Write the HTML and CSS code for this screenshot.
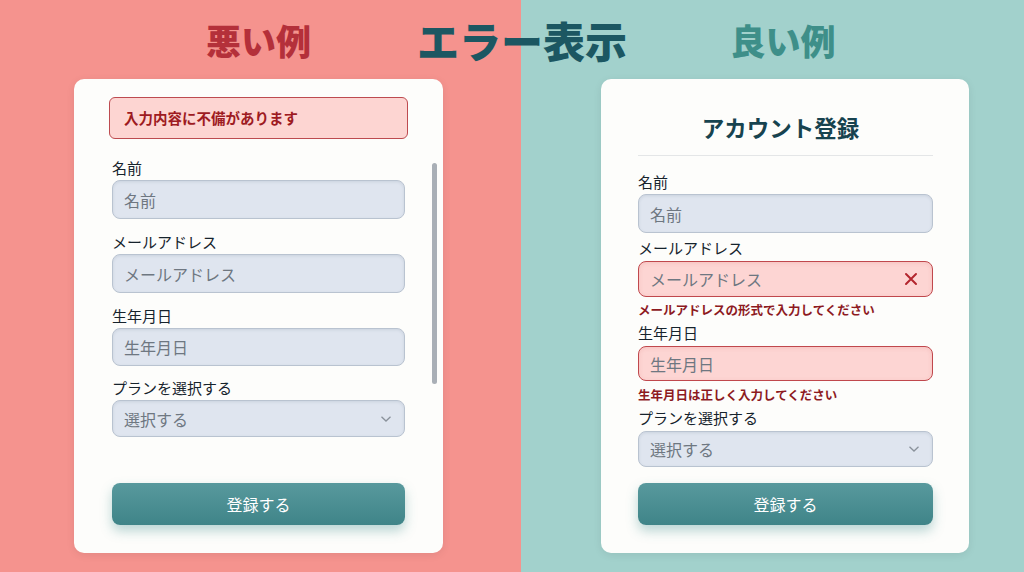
FILE: index.html
```html
<!DOCTYPE html>
<html lang="ja">
<head>
  <meta charset="UTF-8" />
  <meta name="viewport" content="width=device-width, initial-scale=1.0" />
  <title>エラー表示</title>
  <link rel="stylesheet" href="styles.css">
</head>
<body>
  <div class="page">
    <h1 class="main-title">エラー表示</h1>

    <!-- 悪い例 -->
    <section class="side bad">
      <h2 class="side-title">悪い例</h2>
      <div class="card bad-card">
        <div class="alert">入力内容に不備があります</div>
        <div class="scroll-area">
          <form class="form">
            <div class="group">
              <label>名前</label>
              <div class="input-box"><input type="text" placeholder="名前"></div>
            </div>
            <div class="group">
              <label>メールアドレス</label>
              <div class="input-box"><input type="text" placeholder="メールアドレス"></div>
            </div>
            <div class="group">
              <label>生年月日</label>
              <div class="input-box h38"><input type="text" placeholder="生年月日"></div>
            </div>
            <div class="group g-plan">
              <label>プランを選択する</label>
              <div class="input-box select h37">
                <span class="select-text">選択する</span>
                <svg class="chevron" width="12" height="8" viewBox="0 0 12 8"><path d="M1.5 1.8 L6 6 L10.5 1.8" fill="none" stroke="#8a929b" stroke-width="1.3"/></svg>
              </div>
            </div>
            <button type="button" class="submit bad-submit">登録する</button>
          </form>
          <div class="scrollbar"></div>
        </div>
      </div>
    </section>

    <!-- 良い例 -->
    <section class="side good">
      <h2 class="side-title">良い例</h2>
      <div class="card good-card">
        <h3 class="card-title">アカウント登録</h3>
        <div class="divider"></div>
        <form class="form">
          <div class="group g-name">
            <label>名前</label>
            <div class="input-box"><input type="text" placeholder="名前"></div>
          </div>
          <div class="group g-tight">
            <label>メールアドレス</label>
            <div class="input-box error h36">
              <input type="text" placeholder="メールアドレス">
              <svg class="x-icon" width="14" height="14" viewBox="0 0 14 14"><path d="M2 2 L12 12 M12 2 L2 12" stroke="#b3262e" stroke-width="2" stroke-linecap="round"/></svg>
            </div>
            <p class="error-msg">メールアドレスの形式で入力してください</p>
          </div>
          <div class="group g-tight">
            <label>生年月日</label>
            <div class="input-box error h35"><input type="text" placeholder="生年月日"></div>
            <p class="error-msg second">生年月日は正しく入力してください</p>
          </div>
          <div class="group g-tight">
            <label>プランを選択する</label>
            <div class="input-box select h36">
              <span class="select-text">選択する</span>
              <svg class="chevron" width="12" height="8" viewBox="0 0 12 8"><path d="M1.5 1.8 L6 6 L10.5 1.8" fill="none" stroke="#8a929b" stroke-width="1.3"/></svg>
            </div>
          </div>
          <button type="button" class="submit good-submit">登録する</button>
        </form>
      </div>
    </section>
  </div>
</body>
</html>
```

FILE: styles.css
```css
* {
  margin: 0;
  padding: 0;
  box-sizing: border-box;
  font-family: "Noto Sans CJK JP", "Noto Sans", sans-serif;
}

body {
  width: 1024px;
  height: 572px;
  overflow: hidden;
}

.page {
  display: grid;
  grid-template-columns: 521px 1fr;
  height: 572px;
}

.main-title {
  grid-row: 1;
  grid-column: 1 / 3;
  justify-self: center;
  align-self: start;
  z-index: 1;
  padding-left: 20px;
  height: 79px;
  line-height: 80px;
  font-size: 42px;
  font-weight: 900;
  color: #1c5762;
}

.side {
  grid-row: 1;
  display: flex;
  flex-direction: column;
}

.side.bad {
  grid-column: 1;
  background-color: #f5938e;
  padding-left: 74px;
}

.side.good {
  grid-column: 2;
  background-color: #a2d1cc;
  padding-left: 80px;
}

.side-title {
  height: 79px;
  line-height: 80px;
  text-align: center;
  font-size: 35px;
  font-weight: 900;
}

.bad .side-title {
  width: 369px;
  color: #b4303a;
}

.good .side-title {
  width: 368px;
  padding-right: 4px;
  color: #3e8f89;
}

.card {
  height: 474px;
  background-color: #fdfdfb;
  border-radius: 10px;
  box-shadow: 0 2px 8px rgba(0, 0, 0, 0.08);
}

.bad-card {
  width: 369px;
  padding: 18px 6px 0 35px;
}

.good-card {
  width: 368px;
  padding: 32px 36px 0 37px;
}

/* alert on the bad form */
.alert {
  width: 299px;
  height: 42px;
  border: 1px solid #bd4b50;
  border-radius: 6px;
  background-color: #fdd5d2;
  padding-left: 14px;
  line-height: 40px;
  font-size: 14.5px;
  font-weight: 700;
  color: #9e1b22;
}

.scroll-area {
  display: flex;
  margin-top: 18px;
}

.bad-card .form {
  margin-left: 3px;
  width: 293px;
}

.good-card .form {
  width: 295px;
}

.scrollbar {
  margin-left: auto;
  margin-top: 6px;
  width: 5px;
  height: 221px;
  border-radius: 3px;
  background-color: #a9afb6;
}

/* fields */
.group label {
  display: block;
  height: 22px;
  line-height: 22px;
  font-size: 15px;
  font-weight: 400;
  color: #16232c;
}

.bad-card .group + .group {
  margin-top: 12px;
}

.bad-card .group.g-plan {
  margin-top: 11px;
}

.input-box {
  display: flex;
  align-items: center;
  height: 39px;
  margin-top: 1px;
  padding: 0 12px 0 11px;
  border: 1px solid #b9c3d0;
  border-radius: 8px;
  background-color: #dfe5ef;
  box-shadow: inset 0 1px 3px rgba(60, 80, 110, 0.12);
}

.input-box.h38 { height: 38px; }
.input-box.h37 { height: 37px; }
.input-box.h36 { height: 36px; }
.input-box.h35 { height: 35px; }

.input-box input {
  flex: 1;
  min-width: 0;
  border: none;
  outline: none;
  background: transparent;
  font-size: 16px;
  color: #333;
}

.input-box input::placeholder,
.select-text {
  color: #6e7781;
  font-size: 16px;
}

.select {
  justify-content: space-between;
}

.input-box.error {
  border-color: #c0484d;
  background-color: #fdd5d3;
  box-shadow: inset 0 1px 4px rgba(200, 80, 80, 0.15);
}

.good-card .input-box {
  margin-top: 2px;
}

.good-card .g-name .input-box {
  margin-top: 1px;
}

.x-icon {
  flex-shrink: 0;
  margin-right: 2px;
}

.card-title {
  height: 32px;
  line-height: 32px;
  padding-right: 10px;
  text-align: center;
  font-size: 22.5px;
  font-weight: 700;
  color: #17434f;
}

.divider {
  width: 295px;
  height: 1px;
  margin-top: 12px;
  background-color: #e4e6e7;
}

.g-name {
  margin-top: 15px;
}

.good-card .g-tight {
  margin-top: 3px;
}

.good-card .g-name + .g-tight {
  margin-top: 4px;
}

.error-msg {
  margin-top: 4px;
  height: 18px;
  line-height: 18px;
  font-size: 12.5px;
  font-weight: 700;
  color: #8d1a1f;
}

.error-msg.second {
  margin-top: 5px;
}

/* submit */
.submit {
  display: block;
  width: 100%;
  height: 42px;
  border: none;
  border-radius: 8px;
  background: linear-gradient(#58999d, #3f8488);
  box-shadow: 0 6px 12px rgba(60, 140, 140, 0.35);
  color: #fff;
  font-size: 16px;
  cursor: pointer;
}

.bad-submit {
  margin-top: 46px;
}

.good-submit {
  margin-top: 16px;
}
```
